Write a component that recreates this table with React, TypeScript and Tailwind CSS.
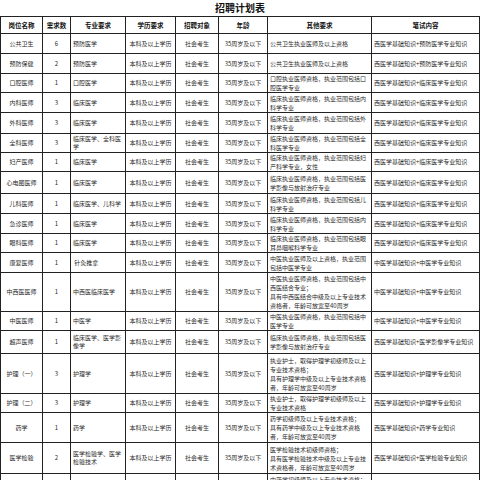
const rows: {
  name: string;
  num: string;
  major: string[];
  other: string[];
  exam: string;
  h: string;
}[] = [
  { name: "公共卫生", num: "6", major: ["预防医学"], other: ["公共卫生执业医师及以上资格"], exam: "西医学基础知识+预防医学专业知识", h: "h-[20px]" },
  { name: "预防保健", num: "2", major: ["预防医学"], other: ["公共卫生执业医师及以上资格"], exam: "西医学基础知识+预防医学专业知识", h: "h-[20px]" },
  { name: "口腔医师", num: "1", major: ["口腔医学"], other: ["口腔执业医师资格，执业范围包括口", "腔医学专业"], exam: "西医学基础知识+临床医学专业知识", h: "h-[19px]" },
  { name: "内科医师", num: "3", major: ["临床医学"], other: ["临床执业医师资格，执业范围包括内", "科学专业"], exam: "西医学基础知识+临床医学专业知识", h: "h-[20px]" },
  { name: "外科医师", num: "3", major: ["临床医学"], other: ["临床执业医师资格，执业范围包括外", "科学专业"], exam: "西医学基础知识+临床医学专业知识", h: "h-[21px]" },
  { name: "全科医师", num: "3", major: ["临床医学、全科医", "学"], other: ["临床执业医师资格，执业范围包括全", "科医学专业"], exam: "西医学基础知识+临床医学专业知识", h: "h-[19px]" },
  { name: "妇产医师", num: "1", major: ["临床医学"], other: ["临床执业医师资格，执业范围包括妇", "产科学专业，女性"], exam: "西医学基础知识+临床医学专业知识", h: "h-[17px]" },
  { name: "心电图医师", num: "1", major: ["临床医学"], other: ["临床执业医师资格，执业范围包括医", "学影像与放射治疗专业"], exam: "西医学基础知识+临床医学专业知识", h: "h-[22px]" },
  { name: "儿科医师", num: "1", major: ["临床医学、儿科学"], other: ["临床执业医师资格，执业范围包括儿", "科学专业"], exam: "西医学基础知识+临床医学专业知识", h: "h-[20px]" },
  { name: "急诊医师", num: "1", major: ["临床医学"], other: ["临床执业医师资格，执业范围包括内", "科学专业"], exam: "西医学基础知识+临床医学专业知识", h: "h-[20px]" },
  { name: "眼科医师", num: "1", major: ["临床医学"], other: ["临床执业医师资格，执业范围包括眼", "耳鼻咽喉科学专业"], exam: "西医学基础知识+临床医学专业知识", h: "h-[17px]" },
  { name: "康复医师", num: "1", major: [" 针灸推拿"], other: ["中医执业医师及以上资格，执业范围", "包括中医学专业"], exam: "中医学基础知识+中医学专业知识", h: "h-[20px]" },
  { name: "中西医医师", num: "1", major: ["中西医临床医学"], other: ["中医执业医师资格，执业范围包括中", "西医结合专业；", "具有中西医结合中级及以上专业技术", "资格者，年龄可放宽至40周岁"], exam: "中医学基础知识+中医学专业知识", h: "h-[39px]" },
  { name: "中医医师", num: "1", major: ["中医学"], other: ["中医执业医师资格，执业范围包括中", "医学专业"], exam: "中医学基础知识+中医学专业知识", h: "h-[18px]" },
  { name: "超声医师", num: "1", major: ["临床医学、医学影", "像学"], other: ["临床执业医师资格，执业范围包括医", "学影像与放射治疗专业"], exam: "西医学基础知识+医学影像学专业知识", h: "h-[23px]" },
  { name: "护理（一）", num: "3", major: ["护理学"], other: ["执业护士，取得护理学初级师及以上", "专业技术资格；", "具有护理学中级及以上专业技术资格", "者，年龄可放宽至40周岁"], exam: "西医学基础知识+护理学专业知识", h: "h-[40px]" },
  { name: "护理（二）", num: "3", major: ["护理学"], other: ["执业护士，取得护理学初级师及以上", "专业技术资格"], exam: "西医学基础知识+护理学专业知识", h: "h-[19px]" },
  { name: "药学", num: "1", major: ["药学"], other: ["药学初级师及以上专业技术资格；", "具有药学中级及以上专业技术资格", "者，年龄可放宽至40周岁"], exam: "西医学基础知识+药学专业知识", h: "h-[30px]" },
  { name: "医学检验", num: "2", major: ["医学检验学、医学", "检验技术"], other: ["医学检验技术初级师资格；", "具有医学检验技术中级及以上专业技", "术资格者，年龄可放宽至40周岁"], exam: "西医学基础知识+医学检验专业知识", h: "h-[31px]" },
  { name: "中药", num: "1", major: ["中药学"], other: ["中药学初级师及以上专业技术资格；", "具有中药学中级及以上专业技术资格", "者，年龄可放宽至40周岁"], exam: "中医学基础知识+中药学专业知识", h: "h-[30px]" },
];

const headers = ["岗位名称", "需求数", "专业要求", "学历要求", "招聘对象", "年龄", "其他要求", "笔试内容"];
const widths = ["w-[42px]", "w-[28px]", "w-[55px]", "w-[50px]", "w-[43px]", "w-[49px]", "w-[104px]", "w-[108px]"];

const cell = "border border-[#222] px-[2px] align-middle";

export default function App() {
  return (
    <div
      className="w-[480px] bg-white text-[#2a2a2a] text-[6px] leading-[8px]"
      style={{ fontFamily: '"Noto Sans CJK SC", "Noto Sans", sans-serif' }}
    >
      <div className="h-[16px] flex items-center justify-center text-[10px] font-bold text-[#111]">
        招聘计划表
      </div>
      <table className="w-[479px] table-fixed border-collapse">
        <colgroup>
          {widths.map((w, i) => (
            <col key={i} className={w} />
          ))}
        </colgroup>
        <thead>
          <tr className="h-[17px]">
            {headers.map((h) => (
              <th key={h} className={`${cell} text-center font-bold text-[6.5px] text-[#111]`}>
                {h}
              </th>
            ))}
          </tr>
        </thead>
        <tbody>
          {rows.map((r) => (
            <tr key={r.name} className={r.h}>
              <td className={`${cell} text-center whitespace-nowrap`}>{r.name}</td>
              <td className={`${cell} text-center`}>{r.num}</td>
              <td className={`${cell} whitespace-pre`}>
                {r.major.map((m, i) => (
                  <div key={i}>{m}</div>
                ))}
              </td>
              <td className={`${cell} text-center whitespace-nowrap`}>本科及以上学历</td>
              <td className={`${cell} text-center whitespace-nowrap`}>社会考生</td>
              <td className={`${cell} text-center whitespace-nowrap`}>35周岁及以下</td>
              <td className={`${cell} whitespace-nowrap leading-[9px]`}>
                {r.other.map((o, i) => (
                  <div key={i}>{o}</div>
                ))}
              </td>
              <td className={`${cell} whitespace-nowrap`}>{r.exam}</td>
            </tr>
          ))}
        </tbody>
      </table>
    </div>
  );
}
